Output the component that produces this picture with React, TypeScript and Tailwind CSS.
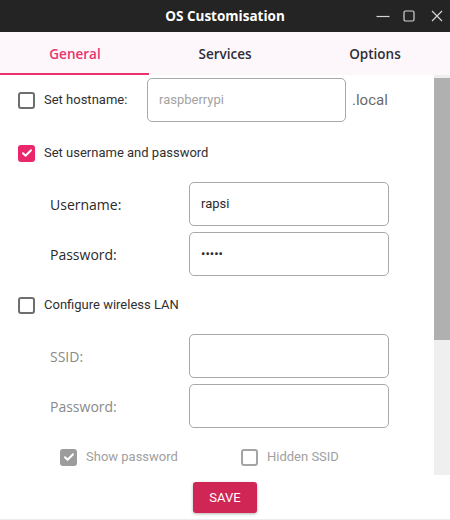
import React from "react";

const ROBOTO = "font-['Roboto',_'Liberation_Sans',_sans-serif]";
const FIRA = "font-['Open_Sans',_'Noto_Sans',_sans-serif]";

function Check({ checked, tone = "pink" }: { checked?: boolean; tone?: "pink" | "gray" }) {
  if (checked) {
    const bg = tone === "pink" ? "bg-[#e9276a]" : "bg-[#9c9c9c]";
    return (
      <div className={`w-[17px] h-[17px] rounded-[3px] ${bg} flex items-center justify-center shrink-0`}>
        <svg width="12" height="12" viewBox="0 0 12 12" fill="none">
          <path d="M2 6.3l2.6 2.5L10 3.2" stroke="white" strokeWidth="2" strokeLinecap="round" strokeLinejoin="round" />
        </svg>
      </div>
    );
  }
  const border = tone === "pink" ? "border-[#6e6e6e]" : "border-[#a4a4a4]";
  return <div className={`w-[17px] h-[17px] rounded-[3px] border-2 ${border} bg-white shrink-0`} />;
}

function Field({ value }: { value?: string }) {
  return (
    <div className="w-[200px] h-[44px] rounded-[5px] border border-[#a9a9a9] bg-white flex items-center px-[11px]">
      {value && <span className={`${ROBOTO} text-[13px] text-[#2a2a2a]`}>{value}</span>}
    </div>
  );
}

export default function App() {
  return (
    <div className="w-[450px] h-[520px] bg-white flex flex-col overflow-hidden">
      {/* Title bar */}
      <div className="h-[32px] bg-[#242424] flex items-center relative shrink-0">
        <div className={`flex-1 text-center text-white text-[13.5px] font-bold ${FIRA}`}>OS Customisation</div>
        <div className="absolute right-0 top-0 h-[32px] flex items-center">
          <svg width="16" height="16" viewBox="0 0 16 16" className="mr-[11px]">
            <path d="M1.5 8.5h13" stroke="#d4d4d4" strokeWidth="1.2" />
          </svg>
          <svg width="14" height="14" viewBox="0 0 14 14" className="mr-[14px]">
            <rect x="2" y="2" width="10" height="10" rx="1.5" stroke="#d4d4d4" strokeWidth="1.2" fill="none" />
          </svg>
          <svg width="14" height="14" viewBox="0 0 14 14" className="mr-[6px]">
            <path d="M2 2l10 10M12 2L2 12" stroke="#d4d4d4" strokeWidth="1.2" />
          </svg>
        </div>
      </div>

      {/* Tabs */}
      <div className={`h-[43px] bg-[#fdf7fc] flex shrink-0 ${FIRA} text-[13.5px] font-semibold`}>
        <div className="w-[150px] flex flex-col">
          <div className="flex-1 flex items-center justify-center pt-[3px] text-[#e8336d]">General</div>
          <div className="h-[2px] w-[149px] bg-[#e8336d]" />
        </div>
        <div className="w-[150px] flex items-center justify-center text-[#2d2d38] pt-[1px]">Services</div>
        <div className="w-[150px] flex items-center justify-center text-[#2d2d38] pt-[1px]">Options</div>
      </div>

      {/* Content + scrollbar */}
      <div className="h-[400px] flex shrink-0">
        <div className={`flex-1 pl-[18px] pt-[3px] ${ROBOTO} text-[13px] text-[#303030]`}>
          <div className="h-[44px] flex items-center">
            <Check />
            <span className="ml-[9px] w-[103px]">Set hostname:</span>
            <div className="w-[199px] h-[44px] rounded-[5px] border border-[#a9a9a9] flex items-center px-[11px]">
              <span className="text-[13px] text-[#a3a3a3]">raspberrypi</span>
            </div>
            <span className="ml-[6px] text-[15px] text-[#6a6a6a]">.local</span>
          </div>

          <div className="mt-[21px] h-[20px] flex items-center">
            <Check checked />
            <span className="ml-[9px]">Set username and password</span>
          </div>

          <div className="mt-[19px] pl-[32px] h-[44px] flex items-center">
            <span className={`w-[139px] ${FIRA} text-[14px] font-medium text-[#2a2a2a]`}>Username:</span>
            <Field value="rapsi" />
          </div>
          <div className="mt-[6px] pl-[32px] h-[44px] flex items-center">
            <span className={`w-[139px] ${FIRA} text-[14px] font-medium text-[#2a2a2a]`}>Password:</span>
            <Field value="•••••" />
          </div>

          <div className="mt-[19px] h-[20px] flex items-center">
            <Check />
            <span className="ml-[9px] text-[13px]">Configure wireless LAN</span>
          </div>

          <div className="mt-[19px] pl-[32px] h-[44px] flex items-center">
            <span className={`w-[139px] ${FIRA} text-[14px] text-[#8a8a8a]`}>SSID:</span>
            <Field />
          </div>
          <div className="mt-[6px] pl-[32px] h-[44px] flex items-center">
            <span className={`w-[139px] ${FIRA} text-[14px] text-[#8a8a8a]`}>Password:</span>
            <Field />
          </div>

          <div className="mt-[19px] pl-[42px] h-[20px] flex items-center text-[#a0a0a0]">
            <Check checked tone="gray" />
            <span className="ml-[9px] w-[155px]">Show password</span>
            <Check tone="gray" />
            <span className="ml-[9px]">Hidden SSID</span>
          </div>
        </div>

        {/* Scrollbar */}
        <div className="w-[16px] bg-[#efefef] flex flex-col">
          <div className="mt-[3px] h-[262px] bg-[#b0b0b0]" />
        </div>
      </div>

      {/* Footer */}
      <div className="flex-1 flex justify-center pt-[7px] border-b border-[#ececec]">
        <button
          className={`w-[64px] h-[31px] rounded-[3px] bg-[#cf2656] text-white text-[13px] ${ROBOTO} shadow-[0_1px_3px_rgba(0,0,0,0.3)]`}
        >
          SAVE
        </button>
      </div>
    </div>
  );
}
